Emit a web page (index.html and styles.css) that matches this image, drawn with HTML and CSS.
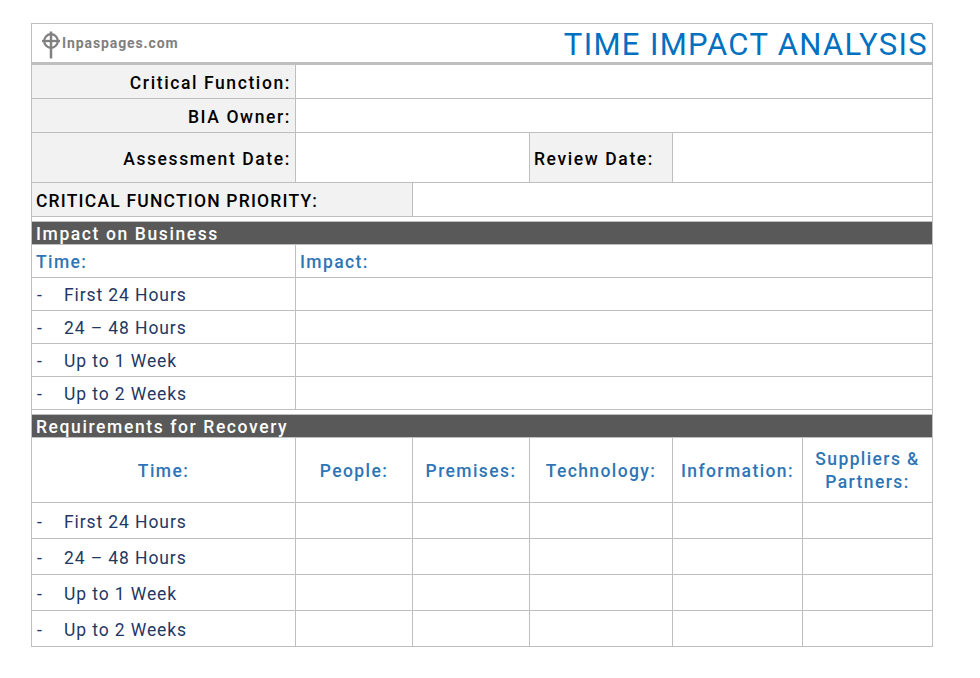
FILE: index.html
```html
<!DOCTYPE html>
<html>
<head>
<meta charset="utf-8">
<link rel="stylesheet" href="styles.css">
</head>
<body>
<div class="page">
  <div class="top">
    <div class="logo">
      <svg class="logo-icon" width="20" height="28" viewBox="0 0 20 28">
        <circle cx="10" cy="10" r="6.8" fill="none" stroke="#808080" stroke-width="2.3"/>
        <line x1="10" y1="0.5" x2="10" y2="27.5" stroke="#808080" stroke-width="2.5"/>
        <line x1="1" y1="10" x2="19" y2="10" stroke="#808080" stroke-width="2.3"/>
      </svg>
      <span class="logo-text">Inpaspages.com</span>
    </div>
    <div class="title">TIME IMPACT ANALYSIS</div>
  </div>
  <table class="form">
    <colgroup>
      <col class="c1"><col class="c2"><col class="c3"><col class="c4"><col class="c5"><col class="c6">
    </colgroup>
    <tr class="r34">
      <td class="lbl right">Critical Function:</td>
      <td colspan="5"></td>
    </tr>
    <tr class="r34">
      <td class="lbl right">BIA Owner:</td>
      <td colspan="5"></td>
    </tr>
    <tr class="r50">
      <td class="lbl right">Assessment Date:</td>
      <td colspan="2"></td>
      <td class="lbl left">Review Date:</td>
      <td colspan="2"></td>
    </tr>
    <tr class="r34">
      <td class="lbl left prio" colspan="2">CRITICAL FUNCTION PRIORITY:</td>
      <td colspan="4"></td>
    </tr>
    <tr class="gap"><td colspan="6"></td></tr>
    <tr class="bar"><td colspan="6">Impact on Business</td></tr>
    <tr class="r33">
      <td class="head left">Time:</td>
      <td class="head left" colspan="5">Impact:</td>
    </tr>
    <tr class="r33"><td class="item"><span class="dash">-</span>First 24 Hours</td><td colspan="5"></td></tr>
    <tr class="r33"><td class="item"><span class="dash">-</span>24 – 48 Hours</td><td colspan="5"></td></tr>
    <tr class="r33"><td class="item"><span class="dash">-</span>Up to 1 Week</td><td colspan="5"></td></tr>
    <tr class="r33"><td class="item"><span class="dash">-</span>Up to 2 Weeks</td><td colspan="5"></td></tr>
    <tr class="gap"><td colspan="6"></td></tr>
    <tr class="bar"><td colspan="6">Requirements for Recovery</td></tr>
    <tr class="r65">
      <td class="head center">Time:</td>
      <td class="head center">People:</td>
      <td class="head center">Premises:</td>
      <td class="head center">Technology:</td>
      <td class="head center">Information:</td>
      <td class="head center">Suppliers &amp;<br>Partners:</td>
    </tr>
    <tr class="r36"><td class="item"><span class="dash">-</span>First 24 Hours</td><td></td><td></td><td></td><td></td><td></td></tr>
    <tr class="r36"><td class="item"><span class="dash">-</span>24 – 48 Hours</td><td></td><td></td><td></td><td></td><td></td></tr>
    <tr class="r36"><td class="item"><span class="dash">-</span>Up to 1 Week</td><td></td><td></td><td></td><td></td><td></td></tr>
    <tr class="r36"><td class="item"><span class="dash">-</span>Up to 2 Weeks</td><td></td><td></td><td></td><td></td><td></td></tr>
  </table>
</div>
</body>
</html>
```

FILE: styles.css
```css
html, body {
  margin: 0;
  padding: 0;
  background: #ffffff;
}
body {
  font-family: Roboto, "Liberation Sans", sans-serif;
}
.page {
  margin: 23px 0 0 31px;
  width: 902px;
}
.top {
  box-sizing: border-box;
  width: 902px;
  height: 41px;
  border: 1px solid #bfbfbf;
  border-bottom: 2px solid #bfbfbf;
  display: flex;
  align-items: center;
  justify-content: space-between;
  padding: 0 5px 0 9px;
}
.logo {
  display: flex;
  align-items: center;
  gap: 1px;
}
.logo-icon {
  display: block;
  margin-top: 3px;
}
.logo-text {
  font-size: 14px;
  font-weight: 700;
  color: #7f7f7f;
  letter-spacing: 0.9px;
}
.title {
  font-size: 31px;
  color: #0070c0;
  letter-spacing: 1.35px;
  line-height: 1;
  padding-top: 2px;
  margin-right: -1px;
}
.form {
  border-collapse: collapse;
  table-layout: fixed;
  width: 901px;
}
.c1 { width: 264px; }
.c2 { width: 117px; }
.c3 { width: 117px; }
.c4 { width: 143px; }
.c5 { width: 130px; }
.c6 { width: 130px; }
.form td {
  border: 1px solid #bfbfbf;
  padding: 2px 4px 0;
  font-size: 17.5px;
  box-sizing: border-box;
}
.r34 td { height: 34px; }
.r50 td { height: 50px; }
.r33 td { height: 33px; }
.r36 td { height: 36px; }
.r65 td { height: 65px; }
.form .gap td { height: 5px; padding: 0; }
.lbl {
  background: #f2f2f2;
  font-weight: 500;
  color: #000000;
  letter-spacing: 1.6px;
}
.form td.prio {
  letter-spacing: 1.2px;
}
.right { text-align: right; }
.left { text-align: left; }
.center { text-align: center; }
.form .bar td {
  height: 23px;
  background: #595959;
  color: #ffffff;
  font-weight: 500;
  padding: 1px 4px 0;
  line-height: 20px;
  letter-spacing: 1.6px;
}
.head {
  color: #2e75b6;
  font-weight: 500;
  letter-spacing: 1.4px;
  line-height: 23px;
}
.item {
  color: #1f3864;
  letter-spacing: 0.9px;
}
.dash {
  display: inline-block;
  width: 27px;
  padding-left: 1px;
  letter-spacing: 0;
}
```
